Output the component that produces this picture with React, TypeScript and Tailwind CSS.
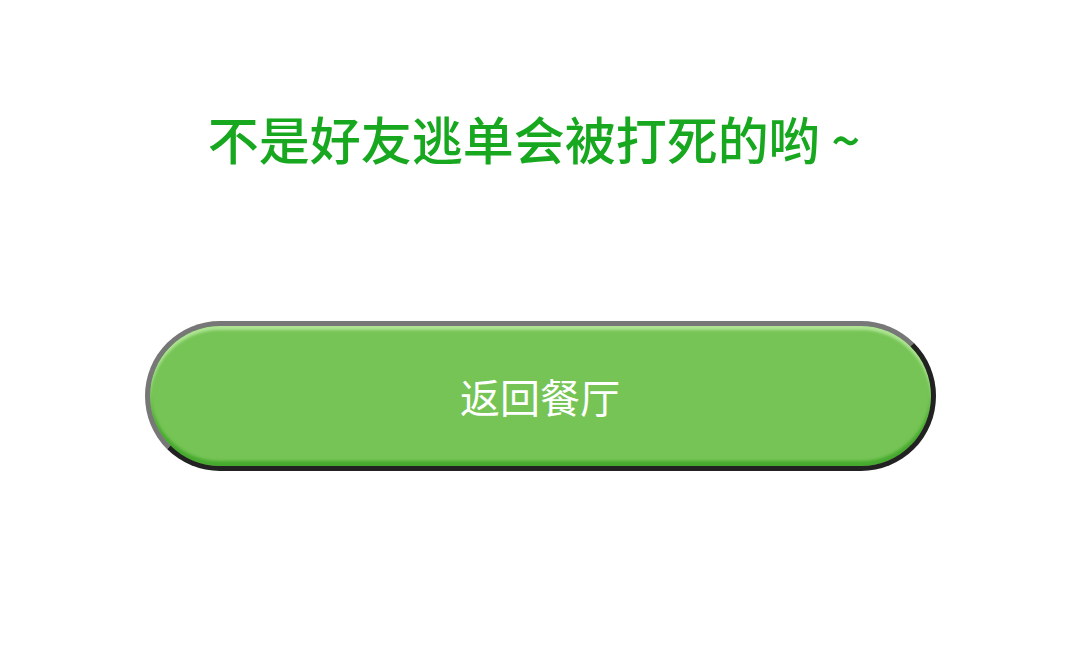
export default function App() {
  return (
    <div
      className="w-full h-[648px] bg-white flex flex-col items-center"
      style={{ fontFamily: '"Noto Sans CJK SC", "Noto Sans", sans-serif' }}
    >
      {/* 提示文字 */}
      <h1 className="mt-[108px] pr-[12px] text-[51px] leading-[60px] font-medium text-[#18a820]">
        不是好友逃单会被打死的哟 ~
      </h1>

      {/* 返回按钮 */}
      <button className="mt-[153px] w-[791px] h-[150px] rounded-full border-[5px] border-t-[#777777] border-l-[#777777] border-r-[#222222] border-b-[#222222] bg-[#76c455] shadow-[inset_0_4px_3px_rgba(220,255,200,0.55),inset_0_-5px_3px_rgba(50,160,30,0.7)] flex items-center justify-center">
        <span className="text-[40px] leading-none text-white">返回餐厅</span>
      </button>
    </div>
  );
}
